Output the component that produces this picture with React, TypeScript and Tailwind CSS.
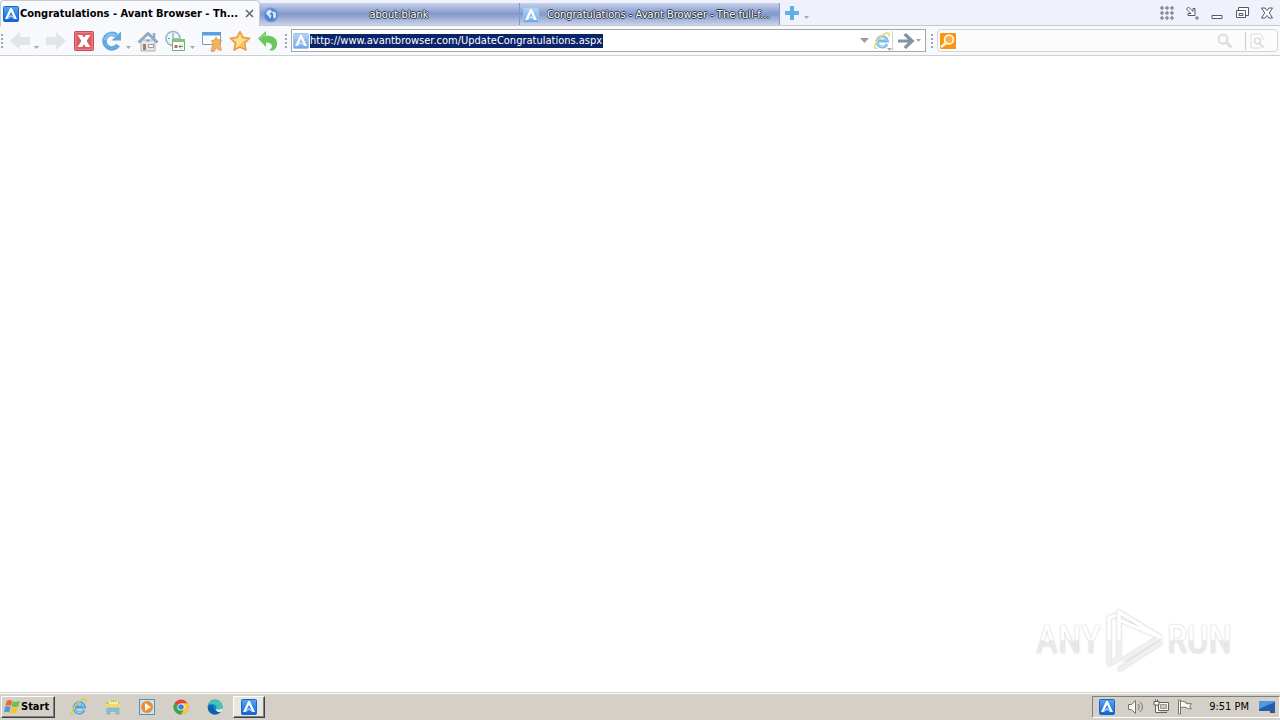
import type { ReactNode } from "react";

const UI = "font-['DejaVu_Sans_Condensed','DejaVu_Sans',sans-serif]";

function AvantIcon({ id, faded = false }: { id: string; faded?: boolean }) {
  const colors = faded ? ["#b4d4f8", "#6fa5e8", "#a3c4ee"] : ["#5aa5f5", "#0c62d8", "#1767cf"];
  return (
    <svg viewBox="0 0 16 16" className="size-4 shrink-0" aria-hidden="true">
      <defs>
        <linearGradient id={id} x1="0" y1="0" x2="0" y2="1">
          <stop offset="0" stopColor={colors[0]} />
          <stop offset="1" stopColor={colors[1]} />
        </linearGradient>
      </defs>
      <rect x=".5" y=".5" width="15" height="15" rx="1" fill={`url(#${id})`} stroke={colors[2]} />
      <path d="M7.2 2 2 13h2.5L8 5.8l3.5 7.2H14L8.8 2Z" fill="#fff" />
      <path d="M4.5 13.5 8 10.8l3.5 2.7-1.2-3L8 9l-2.3 1.5Z" fill="#fff" opacity=".6" />
    </svg>
  );
}

function IeIcon() {
  return (
    <svg viewBox="0 0 18 18" className="size-[18px] shrink-0" aria-hidden="true">
      <path d="M14 12A5.2 5.2 0 1 1 14.4 8.9H4.4" fill="none" stroke="#4ba5dc" strokeWidth="3" />
      <path d="M13.4 11.8A4.8 4.8 0 1 1 13.7 8.8" fill="none" stroke="#a9dcf5" strokeWidth="1" />
      <path d="M4 15.8C1.7 17 .9 15.6 2.1 12.7 4.7 7 10.7 1.2 14.7 1c1.9 0 1.9 1.9 1 3.8" fill="none" stroke="#e0c94f" strokeWidth="1.5" />
    </svg>
  );
}

function TinyArrow() {
  return (
    <svg viewBox="0 0 5 3" className="h-[3px] w-[5px]" aria-hidden="true">
      <path d="M0 0h5L2.5 3Z" fill="#a5a9ae" />
    </svg>
  );
}

function Grip() {
  return (
    <svg viewBox="0 0 2 14" className="h-[14px] w-0.5 shrink-0" aria-hidden="true">
      <path d="M0 0h2v2H0ZM0 4h2v2H0ZM0 8h2v2H0ZM0 12h2v2H0Z" fill="#a0a3ab" />
    </svg>
  );
}

function ToolButton({ label, children }: { label: string; children: ReactNode }) {
  return (
    <button aria-label={label} className="flex h-7 w-7 shrink-0 items-center justify-center">
      <svg viewBox="0 0 22 22" className="size-[22px]" aria-hidden="true">{children}</svg>
    </button>
  );
}

function MoreButton({ label }: { label: string }) {
  return (
    <button aria-label={label} className="flex h-7 w-2 shrink-0 items-end pb-1.5">
      <TinyArrow />
    </button>
  );
}

function Tabs() {
  const outlined =
    "min-w-0 flex-1 truncate text-center text-[11px] leading-[18px] text-white [text-shadow:1px_0_#303848,-1px_0_#303848,0_1px_#303848,0_-1px_#303848]";
  const inactive =
    "flex h-[22px] w-[260px] items-center gap-2 border-r border-[#8798c4] bg-linear-to-b from-[#c7d2eb] via-[#8198cb] via-50% to-[#c9d2e9] pt-0.5 pr-2 pl-[3px]";
  return (
    <header className="flex h-[26px] items-end justify-between border-b border-[#c9cacd] bg-[#eff2fb]">
      <div role="tablist" className="flex items-end">
        <div className="-mb-px flex h-[26px] w-[260px] items-center gap-px rounded-t border border-b-0 border-[#c9cbd2] bg-[#f8f9fd] pr-1 pl-0.5">
          <button role="tab" aria-selected="true" className="flex min-w-0 flex-1 items-center gap-px">
            <AvantIcon id="tab-one" />
            <span className="whitespace-nowrap text-[11px] leading-4 font-bold">Congratulations - Avant Browser - Th...</span>
          </button>
          <button aria-label="Close tab" className="flex size-3 shrink-0 items-center justify-center">
            <svg viewBox="0 0 9 9" className="size-[9px]"><path d="m1 1 7 7M8 1 1 8" stroke="#656a72" strokeWidth="1.6" /></svg>
          </button>
        </div>
        <button role="tab" aria-selected="false" className={inactive}>
          <svg viewBox="0 0 16 16" className="size-4 shrink-0" aria-hidden="true">
            <circle cx="8" cy="8" r="6.8" fill="#4e82cb" stroke="#6e9ad8" strokeWidth="1.4" />
            <path d="m4 4 3-1.5L9 4 8 6 6.5 7l2 1.5L7 12l-1.5-3L3 7ZM10 4l3 2v4l-2 2-1-3 .5-2L9 6Z" fill="#d8e8fa" />
          </svg>
          <span className={outlined}>about:blank</span>
        </button>
        <button role="tab" aria-selected="false" className={inactive}>
          <AvantIcon id="tab-three" faded />
          <span className={outlined}>Congratulations - Avant Browser - The full-f....</span>
        </button>
        <button aria-label="New tab" className="flex h-6 w-6 items-center justify-center">
          <svg viewBox="0 0 14 14" className="size-[14px]"><path d="M5 0h4v5h5v4H9v5H5V9H0V5h5Z" fill="#62aeec" /></svg>
        </button>
        <button aria-label="Tab list" className="flex h-6 w-2 items-end pb-1.5"><TinyArrow /></button>
      </div>
      <div className="flex h-[25px] items-center gap-[11px] pr-1.5">
        <button aria-label="Menu">
          <svg viewBox="0 0 14 14" className="size-[14px]" fill="white" stroke="#555966">
            {[2, 7, 12].map((y) => [2, 7, 12].map((x) => <circle key={`${x}-${y}`} cx={x} cy={y} r="1.2" />))}
          </svg>
        </button>
        <button aria-label="Hide to tray">
          <svg viewBox="0 0 14 14" className="size-[14px]" fill="white" stroke="#555966">
            <path d="m1.5 3 2-2 4.5 4.5V2.5h2V9.5H3v-2h3Z" /><circle cx="12" cy="12" r="1.2" />
          </svg>
        </button>
        <button aria-label="Minimize">
          <svg viewBox="0 0 14 14" className="size-[14px]"><path d="M2 9.5h10v3H2Z" fill="white" stroke="#555966" /></svg>
        </button>
        <button aria-label="Restore">
          <svg viewBox="0 0 14 14" className="size-[14px]" fill="white" stroke="#555966">
            <path d="M3.5 1.5h10v8h-10Z" /><path d="M1.5 4.5h9v7h-9ZM4 7.5h4v2H4Z" />
          </svg>
        </button>
        <button aria-label="Close">
          <svg viewBox="0 0 14 14" className="size-[14px]" fill="white" stroke="#555966">
            <path d="M1.5 2h3.6L7 4.6 8.9 2h3.6L9.3 7l3.2 5H8.9L7 9.4 5.1 12H1.5l3.2-5Z" />
          </svg>
        </button>
      </div>
    </header>
  );
}

function Toolbar() {
  return (
    <nav aria-label="Browser toolbar" className="flex h-[30px] items-center border-b border-[#cfcfd3] bg-[#f8f9fd] pr-0.5">
      <div className="flex w-1.5 shrink-0 pl-px"><Grip /></div>
      <ToolButton label="Back"><path d="M1 11 11 2v5h10v8H11v5Z" fill="#e3e4e7" /></ToolButton>
      <MoreButton label="Back history" />
      <ToolButton label="Forward"><path d="m21 11-10-9v5H1v8h10v5Z" fill="#e3e4e7" /></ToolButton>
      <ToolButton label="Stop">
        <rect x="1.5" y="1.5" width="19" height="19" rx="1" fill="#dc5961" stroke="#c94b54" />
        <rect x="2.7" y="2.7" width="16.6" height="16.6" fill="none" stroke="#ea8b90" />
        <path d="M4.5 5h4.7L11 7.8 12.8 5h4.7l-3.9 6 3.9 6h-4.7L11 14.2 9.2 17H4.5l3.9-6Z" fill="#fff" />
      </ToolButton>
      <ToolButton label="Reload">
        <path d="M15.5 5.6A7.3 7.3 0 1 0 17 15" fill="none" stroke="#62a9df" strokeWidth="4.6" />
        <path d="M10.5 10.5H20V1.4Z" fill="#62a9df" />
        <path d="M14.5 5.3A6.9 6.9 0 0 0 4 10" fill="none" stroke="#9acdf0" strokeWidth="1.4" />
      </ToolButton>
      <MoreButton label="Reload options" />
      <ToolButton label="Home">
        <path d="M4 10h14v11H4Z" fill="#e8e6e4" stroke="#b4b2b3" />
        <path d="m1.5 12.5 9.5-9 9.5 9" fill="none" stroke="#8fabc0" strokeWidth="3" />
        <path d="M17 3v5" fill="none" stroke="#8fabc0" strokeWidth="2.5" />
        <path d="M9.5 9.5h3v2h-3Z" fill="#6f9fce" />
        <path d="M6 14h3v6H6Z" fill="#a67c6b" /><path d="M11.5 14.5h5v3h-5Z" fill="#fff" stroke="#999" />
      </ToolButton>
      <ToolButton label="History">
        <circle cx="8" cy="8.5" r="7" fill="#edf6fa" stroke="#91b8ca" strokeWidth="1.6" />
        <path d="M8 3v6h6M3 8.5h2M8 13v2" stroke="#6d9e9b" fill="none" />
        <path d="M7.5 9.5h12v11h-12Z" fill="#fff" stroke="#69b26c" /><path d="M7 9h13v3H7Z" fill="#83c477" />
        <path d="M9.5 15h3v3h-3Z" fill="#c95f5a" /><path d="M18 16.5h-4m2-2-2 2 2 2" stroke="#54975c" fill="none" />
      </ToolButton>
      <MoreButton label="History list" />
      <ToolButton label="Window favorites">
        <path d="M1.5 2.5h18v12h-18Z" fill="#fafcfe" stroke="#779fc6" /><path d="M1 2h19v3.5H1Z" fill="#5b9fe1" />
        <path d="m15 7 1.7 2.6 4 .5-2 3.2 1.6 7.2-3.5-1-1.4-2-2.5 4.5-3-1 2.1-6.7-1.5-3.7 3-.5Z" fill="#f2b45d" stroke="#dc9652" strokeWidth=".8" />
      </ToolButton>
      <ToolButton label="Favorites">
        <path d="m11 1.5 2.9 5.8 6.8.9-5 4.9 1.3 7-6-3.1-6 3.1 1.3-7-5-4.9 6.8-.9Z" fill="#fbc45f" stroke="#e79a51" strokeWidth="1.5" strokeLinejoin="round" />
        <path d="m11 4 2 5 5 .5-5 2-4 5.5-2 .5 1-5-4-3 4.7-.8Z" fill="#ffe18d" />
      </ToolButton>
      <ToolButton label="Undo close">
        <path d="M1 8.5 9 1v4.5c8 0 12 4 11 9-.5 4-3 6-5 6.2l-3-.7c4-1.6 4.8-7.5-3-7.5V17Z" fill="#69c75d" />
        <path d="m3 8.5 5-4.3V7" fill="none" stroke="#a7de8e" />
      </ToolButton>
      <div className="flex w-[9px] shrink-0 pl-[3px]"><Grip /></div>
      <div className="flex h-[23px] min-w-0 flex-1 items-center border border-[#a5a6aa] bg-white pl-px">
        <AvantIcon id="address" faded />
        <input aria-label="Address" readOnly defaultValue="http://www.avantbrowser.com/UpdateCongratulations.aspx" className="ml-px h-[14px] w-[293px] shrink-0 bg-[#0a246a] p-0 text-[11px] leading-[14px] text-white outline-none" />
        <div className="flex-1" />
        <button aria-label="Address history" className="mr-1"><svg viewBox="0 0 9 5" className="h-[5px] w-[9px]"><path d="M0 0h9L4.5 5Z" fill="#a19b93" /></svg></button>
        <button aria-label="Rendering engine" className="mr-px flex h-5 items-end border-r border-[#d0d0d0]"><span className="-mr-1 mb-px opacity-75"><IeIcon /></span><TinyArrow /></button>
        <button aria-label="Go" className="ml-1"><svg viewBox="0 0 17 16" className="h-4 w-[17px]"><path d="M0 6.5h10L5.5 2 8 0l8.5 8L8 16l-2.5-2L10 9.5H0Z" fill="#8592a3" /></svg></button>
        <button aria-label="Go options" className="mr-1 ml-px"><TinyArrow /></button>
      </div>
      <div className="flex w-[11px] shrink-0 justify-center"><Grip /></div>
      <div className="flex h-[23px] w-[341px] shrink-0 items-center rounded-sm border border-[#d3d4d8] bg-[#fcfcfd] pl-0.5">
        <button aria-label="Search engine">
          <svg viewBox="0 0 16 16" className="size-4"><rect width="16" height="16" rx="1" fill="#fa9419" /><circle cx="9" cy="6.5" r="4.4" fill="#ffad3f" stroke="#fff7df" strokeWidth="1.7" /><path d="m6 10-5 4" stroke="#fff7df" strokeWidth="2.4" /></svg>
        </button>
        <input aria-label="Search" className="min-w-0 flex-1 bg-transparent text-[11px] outline-none" />
        <button aria-label="Search web" className="mr-3"><svg viewBox="0 0 16 16" className="size-4" fill="none" stroke="#dcdcde"><circle cx="6" cy="6" r="4.5" strokeWidth="2" /><path d="m9.5 9.5 5 5" strokeWidth="3" /></svg></button>
        <button aria-label="Find in page" className="mr-3 flex h-[18px] items-center border-l border-[#cbcbce] pl-1"><svg viewBox="0 0 15 16" className="h-4 w-[15px]" fill="none" stroke="#dcdcde"><path d="M11 15H1V1h9l3 3v3" /><circle cx="7.5" cy="8" r="3" strokeWidth="1.7" /><path d="m9.5 10.5 4 4" strokeWidth="2" /></svg></button>
      </div>
    </nav>
  );
}

function Watermark() {
  const word = "bg-linear-to-b from-white from-48% to-[#e9e9e9] to-52% bg-clip-text text-[38px] leading-[48px] text-transparent [filter:drop-shadow(0_0_1px_#c9c9c9)] font-['Roboto_Condensed',Roboto,sans-serif]";
  return (
    <div className="absolute right-12 bottom-5 flex items-center gap-1">
      <span className={word}>ANY</span>
      <svg viewBox="0 0 58 64" className="h-16 w-[58px] [filter:drop-shadow(0_0_1px_#c7c7c7)]" aria-hidden="true">
        <path d="M14 51V4l41 25-35 22M4 10v46l8-4M4 10l7-3M15 61l40-26" fill="none" stroke="#f0f0f0" strokeWidth="4" strokeLinejoin="round" strokeLinecap="round" />
        <path d="M14 32V4l41 25-41-17M4 32V10l7-3" fill="none" stroke="#fff" strokeWidth="3" strokeLinejoin="round" />
      </svg>
      <span className={word}>RUN</span>
    </div>
  );
}

function Taskbar() {
  const raised = "flex h-[22px] items-center border border-t-white border-r-[#404040] border-b-[#404040] border-l-white shadow-[inset_-1px_-1px_#808080]";
  const quick = "flex h-6 w-[34px] items-center justify-center";
  return (
    <footer className="flex h-7 shrink-0 items-center border-t border-[#d4d0c8] bg-[#d4d0c8] shadow-[inset_0_1px_white]">
      <button className={`${raised} ml-px w-[54px] gap-px pl-0.5 text-[11px] leading-4 font-bold`}>
        <svg viewBox="0 0 16 16" className="size-4 shrink-0" aria-hidden="true">
          <path d="M3 1.5c2-1 3.5-.7 5.3.4L7 7.2C5 6 3.5 6 1.3 7Z" fill="#f0643b" /><path d="M9 2.3c2 1 4 .8 7-.5l-1.7 5.6c-2 1-4 1-6.6 0Z" fill="#72bd43" />
          <path d="M1 7.8c2-1 3.7-.8 5.6.2L5.2 13.5c-2-1-3.5-1-5.2-.1Z" fill="#4c99de" /><path d="M7.4 8.4c2 1 4 1 6.5 0l-1.6 5.4c-2 1-4 1-6.4 0Z" fill="#f7c52c" />
        </svg>
        Start
      </button>
      <div className="ml-[7px] flex">
        <button aria-label="Internet Explorer" className={quick}><IeIcon /></button>
        <button aria-label="File Explorer" className={quick}>
          <svg viewBox="0 0 16 16" className="size-4"><path d="M1 3h5l1-1h7v11H1Z" fill="#e2bd5c" /><path d="M4 1h9v5H4Z" fill="#f6eeaa" /><path d="M1 5h14v7H1Z" fill="#f5d876" /><path d="M5 2h7" stroke="#6dbb72" /><path d="M2 9h12v6h-3v-3H5v3H2Z" fill="#83c4e6" stroke="#62a8cc" strokeWidth=".6" /></svg>
        </button>
        <button aria-label="Media Player" className={quick}>
          <svg viewBox="0 0 16 16" className="size-4"><rect x=".5" y=".5" width="15" height="15" fill="#c8e5f6" stroke="#5590bd" /><circle cx="8" cy="8" r="6" fill="#f18b22" /><path d="m6 4 6 4-6 4Z" fill="#fff" /></svg>
        </button>
        <button aria-label="Chrome" className={quick}>
          <svg viewBox="0 0 16 16" className="size-4"><circle cx="8" cy="8" r="7.5" fill="#e64535" /><path d="M1.5 4.3A7.5 7.5 0 0 0 8 15.5l3.3-5.6L8 8Z" fill="#3ca653" /><path d="M8 15.5A7.5 7.5 0 0 0 14.5 4.3H8l3.3 5.6Z" fill="#f8cc35" /><circle cx="8" cy="8" r="3.6" fill="#fff" /><circle cx="8" cy="8" r="2.8" fill="#3c7ee7" /></svg>
        </button>
        <button aria-label="Edge" className={quick}>
          <svg viewBox="0 0 16 16" className="size-4"><circle cx="8" cy="8" r="7.5" fill="#1688cc" /><path d="M.8 6.2C3-1 14.5-.7 15.5 7.2c.2 3-3.8 4.2-6.2 2.5C11 6.4 5.6 3 .8 6.2Z" fill="#46c5b0" /><path d="M1 9c0 4 4 7.2 8 6.4 2.3-.3 4-1.8 5-3.2-3.7 1.6-8-.6-7.4-4.6C3.5 4.4 1 7 1 9Z" fill="#0f62a9" /><path d="M9.3 9.7c1.5 1.1 3.9 1.1 5.5 0l.8 2-2 1c-3 .8-5-.8-4.3-3Z" fill="#e7edf0" /></svg>
        </button>
      </div>
      <button aria-label="Avant Browser" className={`${raised} ml-px w-8 justify-center bg-[#e9e6e2]`}><AvantIcon id="task" /></button>
      <div className="ml-auto flex h-[22px] items-center gap-2 border border-t-[#808080] border-r-white border-b-white border-l-[#808080] pr-1 pl-1.5">
        <AvantIcon id="tray" />
        <svg viewBox="0 0 18 16" className="ml-1 h-4 w-[18px]" fill="#fafafa" stroke="#77746f" aria-label="Volume"><path d="M1.5 5.5h3l4-4v13l-4-4h-3Z" /><path d="M11 5q3 3 0 6M13 3q5 5 0 10" fill="none" /></svg>
        <svg viewBox="0 0 16 16" className="size-4" fill="#fafafa" stroke="#65625d" aria-label="Network"><path d="M5.5 3.5h10v8h-10ZM7 13.5h7M2.5 5v8.5h5" /><path d="M7.5 5.5h6v4h-6Z" fill="#c9c7c3" stroke="#99958f" /><path d="M1 2.5h5V6H1ZM2.5.5v2M4.5.5v2" /></svg>
        <svg viewBox="0 0 16 16" className="size-4" fill="#fafafa" stroke="#77746f" aria-label="Action center"><path d="M1.5 1v14h2V1ZM3.5 2.5c3-1 4 1 6 1v1.2h5l-2 3 2 2c-3 .5-4-.5-5-1-2-.8-4-.8-6 .3Z" /></svg>
        <time className="mr-0.5 ml-2 whitespace-nowrap text-[11px] leading-4">9:51 PM</time>
        <button aria-label="Show desktop"><svg viewBox="0 0 16 14" className="h-[14px] w-4"><path d="M0 1h16v10H0Z" fill="#245dab" /><path d="M0 1h16v1L0 9Z" fill="#5299dc" /><path d="M11 11h5v2h-5Z" fill="#444f64" /></svg></button>
      </div>
    </footer>
  );
}

export default function App() {
  return (
    <div className={`${UI} flex h-screen min-w-[900px] flex-col overflow-hidden bg-white text-black`}>
      <Tabs />
      <Toolbar />
      <main className="relative min-h-0 flex-1"><Watermark /></main>
      <Taskbar />
    </div>
  );
}
